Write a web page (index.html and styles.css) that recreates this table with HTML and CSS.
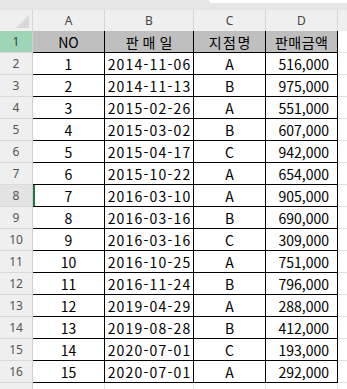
FILE: index.html
```html
<!DOCTYPE html>
<html lang="ko">
<head>
<meta charset="utf-8">
<link rel="stylesheet" href="styles.css">
</head>
<body>
<div class="topband"><div class="formula"></div></div>
<div class="sheet">
  <div class="row colhead">
    <div class="corner"><span class="tri"></span></div>
    <div class="ch">A</div><div class="ch">B</div><div class="ch">C</div><div class="ch">D</div><div class="ch last"></div>
  </div>
  <div class="row">
    <div class="rh rh-green">1</div>
    <div class="c head">NO</div><div class="c head wide">판매일</div><div class="c head mid">지점명</div><div class="c head amt">판매금액</div><div class="x"></div>
  </div>
  <div class="row"><div class="rh">2</div><div class="c">1</div><div class="c date">2014-11-06</div><div class="c">A</div><div class="c num">516,000</div><div class="x"></div></div>
  <div class="row"><div class="rh">3</div><div class="c">2</div><div class="c date">2014-11-13</div><div class="c">B</div><div class="c num">975,000</div><div class="x"></div></div>
  <div class="row"><div class="rh">4</div><div class="c">3</div><div class="c date">2015-02-26</div><div class="c">A</div><div class="c num">551,000</div><div class="x"></div></div>
  <div class="row"><div class="rh">5</div><div class="c">4</div><div class="c date">2015-03-02</div><div class="c">B</div><div class="c num">607,000</div><div class="x"></div></div>
  <div class="row"><div class="rh">6</div><div class="c">5</div><div class="c date">2015-04-17</div><div class="c">C</div><div class="c num">942,000</div><div class="x"></div></div>
  <div class="row"><div class="rh">7</div><div class="c">6</div><div class="c date">2015-10-22</div><div class="c">A</div><div class="c num">654,000</div><div class="x"></div></div>
  <div class="row"><div class="rh rh-active">8</div><div class="c active">7</div><div class="c date">2016-03-10</div><div class="c">A</div><div class="c num">905,000</div><div class="x"></div></div>
  <div class="row"><div class="rh">9</div><div class="c">8</div><div class="c date">2016-03-16</div><div class="c">B</div><div class="c num">690,000</div><div class="x"></div></div>
  <div class="row"><div class="rh">10</div><div class="c">9</div><div class="c date">2016-03-16</div><div class="c">C</div><div class="c num">309,000</div><div class="x"></div></div>
  <div class="row"><div class="rh">11</div><div class="c">10</div><div class="c date">2016-10-25</div><div class="c">A</div><div class="c num">751,000</div><div class="x"></div></div>
  <div class="row"><div class="rh">12</div><div class="c">11</div><div class="c date">2016-11-24</div><div class="c">B</div><div class="c num">796,000</div><div class="x"></div></div>
  <div class="row"><div class="rh">13</div><div class="c">12</div><div class="c date">2019-04-29</div><div class="c">A</div><div class="c num">288,000</div><div class="x"></div></div>
  <div class="row"><div class="rh">14</div><div class="c">13</div><div class="c date">2019-08-28</div><div class="c">B</div><div class="c num">412,000</div><div class="x"></div></div>
  <div class="row"><div class="rh">15</div><div class="c">14</div><div class="c date">2020-07-01</div><div class="c">C</div><div class="c num">193,000</div><div class="x"></div></div>
  <div class="row"><div class="rh">16</div><div class="c">15</div><div class="c date">2020-07-01</div><div class="c">A</div><div class="c num">292,000</div><div class="x"></div></div>
  <div class="row"><div class="rh"></div><div class="e"></div><div class="e"></div><div class="e"></div><div class="e"></div><div class="x"></div></div>
</div>
</body>
</html>
```
FILE: styles.css
```css
html, body {
  margin: 0;
  padding: 0;
  background: #ffffff;
  overflow: hidden;
}
body {
  width: 347px;
  height: 389px;
  font-family: "Noto Sans CJK KR", "Noto Sans", sans-serif;
  font-size: 14px;
  color: #000;
}
.topband {
  height: 10px;
  background: #e6e6e6;
  display: flex;
  justify-content: flex-end;
}
.formula {
  width: 138px;
  height: 3px;
  background: #ffffff;
  border-bottom-left-radius: 4px;
}
.row {
  display: grid;
  grid-template-columns: 33px 72px 89px 72px 72px 1fr;
  height: 22px;
}
.row > div {
  box-sizing: border-box;
  display: flex;
  align-items: center;
  justify-content: center;
  line-height: 1;
  white-space: nowrap;
  overflow: hidden;
}
.colhead {
  height: 21px;
  background: #efefef;
}
.corner {
  position: relative;
  border-right: 1px solid #d6d6d6;
}
.tri {
  position: absolute;
  right: 3px;
  bottom: 3px;
  width: 0;
  height: 0;
  border-left: 13px solid transparent;
  border-bottom: 13px solid #d8d8d8;
}
.ch {
  color: #444;
  font-family: "Noto Sans", "Liberation Sans", sans-serif;
  font-size: 12px;
  border-right: 1px solid #d6d6d6;
}
.ch.last { border-right: none; }
.rh {
  background: #efefef;
  color: #555;
  font-family: "Noto Sans", "Liberation Sans", sans-serif;
  font-size: 12px;
  border-right: 1px solid #d0d0d0;
  border-bottom: 1px solid #dadada;
}
.rh-green {
  background: #9fd5b7;
  color: #1f4e35;
}
.rh-active {
  background: #e3e3e3;
}
.c {
  border-right: 1px solid #000;
  border-bottom: 1px solid #000;
  background: #fff;
}
.c.head {
  background: #bfbfbf;
  font-size: 14px;
}
.c.head.wide {
  letter-spacing: 4px;
  padding-left: 4px;
}
.c.head.mid {
  letter-spacing: 1.5px;
  padding-left: 1.5px;
}
.c.head.amt {
  letter-spacing: 0.5px;
  padding-left: 0.5px;
}
.c.date {
  letter-spacing: 1.2px;
  padding-left: 1.2px;
}
.c.num {
  justify-content: flex-end;
  padding-right: 8px;
}
.c.active {
  box-shadow: inset 2px 0 0 #217346;
}
.x {
  border-bottom: 1px solid #e1e1e1;
  background: #fff;
}
.e {
  border-right: 1px solid #e1e1e1;
  background: #fff;
}
```
